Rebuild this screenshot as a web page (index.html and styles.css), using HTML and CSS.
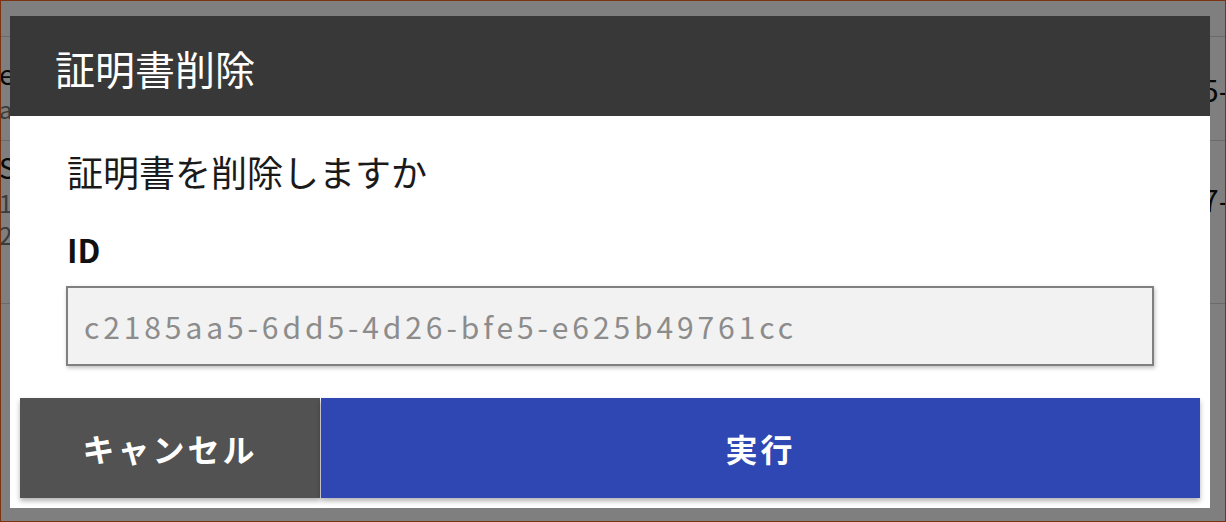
FILE: index.html
```html
<!DOCTYPE html>
<html lang="ja">
<head>
<meta charset="utf-8">
<title>証明書削除</title>
<link rel="stylesheet" href="styles.css">
</head>
<body>
<div class="frame">
  <div class="page">
    <div class="row row-first"></div>
    <div class="row row-a">
      <div class="cell-left">
        <div class="name">e</div>
        <div class="sub">a</div>
      </div>
      <div class="cell-right"><span class="clip">5-</span></div>
    </div>
    <div class="row row-b">
      <div class="cell-left">
        <div class="name">S</div>
        <div class="sub">1</div>
        <div class="sub">2</div>
      </div>
      <div class="cell-right"><span class="clip">7-</span></div>
    </div>
    <div class="row row-c"></div>
  </div>
  <div class="overlay">
    <div class="dialog">
      <div class="dialog-header">
        <h1 class="dialog-title">証明書削除</h1>
      </div>
      <div class="dialog-body">
        <p class="message">証明書を削除しますか</p>
        <div class="field-label">ID</div>
        <div class="field-input">c2185aa5-6dd5-4d26-bfe5-e625b49761cc</div>
      </div>
      <div class="dialog-actions">
        <button class="btn btn-cancel">キャンセル</button>
        <button class="btn btn-exec">実行</button>
      </div>
    </div>
  </div>
</div>
</body>
</html>
```

FILE: styles.css
```css
* { box-sizing: border-box; }
html, body { margin: 0; padding: 0; }
body {
  width: 1226px;
  height: 522px;
  overflow: hidden;
  font-family: "Noto Sans CJK JP", "Noto Sans", sans-serif;
  background: #ffffff;
}
.frame {
  position: relative;
  width: 1226px;
  height: 522px;
  border: 1px solid #7a3210;
  overflow: hidden;
  background: #ffffff;
}
.page {
  display: flex;
  flex-direction: column;
}
.row {
  display: flex;
  justify-content: space-between;
  border-bottom: 1px solid #d6d6d6;
}
.row-first { height: 36px; }
.row-a { height: 104px; }
.row-b { height: 163px; }
.row-c { height: 200px; border-bottom: none; }
.cell-left {
  width: 9px;
  overflow: hidden;
  display: flex;
  flex-direction: column;
}
.row-a .cell-left { padding-top: 16px; }
.row-b .cell-left { padding-top: 6px; }
.name {
  margin-left: -2px;
  font-size: 28px;
  line-height: 40px;
  color: #111;
}
.sub {
  margin-left: -2px;
  font-size: 24px;
  line-height: 32px;
  color: #777;
}
.cell-right {
  width: 17px;
  overflow: hidden;
  white-space: nowrap;
  font-size: 30px;
  line-height: 40px;
  color: #111;
}
.clip {
  display: inline-block;
  margin-left: -6px;
}
.row-a .cell-right { padding-top: 32px; }
.row-b .cell-right { padding-top: 38px; }

.overlay {
  position: absolute;
  inset: 0;
  background: rgba(0, 0, 0, 0.5);
  padding: 15px 0 0 9px;
}
.dialog {
  width: 1200px;
  height: 492px;
  background: #ffffff;
  display: flex;
  flex-direction: column;
}
.dialog-header {
  height: 100px;
  background: #383838;
  padding: 0 0 0 45px;
  display: flex;
  align-items: center;
}
.dialog-title {
  margin: 4px 0 0 0;
  font-size: 40px;
  font-weight: 400;
  line-height: 56px;
  color: #ffffff;
}
.dialog-body {
  flex: 1;
  padding: 0 56px;
  display: flex;
  flex-direction: column;
}
.message {
  margin: 29px 0 0 0;
  font-size: 36px;
  line-height: 52px;
  color: #1a1a1a;
  padding-left: 1px;
}
.field-label {
  margin-top: 32px;
  font-size: 32px;
  font-weight: 700;
  line-height: 40px;
  color: #111;
  padding-left: 1px;
}
.field-input {
  margin-top: 17px;
  height: 80px;
  border: 2px solid #808080;
  background: #f2f2f2;
  box-shadow: 1px 2px 4px rgba(0, 0, 0, 0.25);
  display: flex;
  align-items: center;
  padding-left: 16px;
  font-size: 30px;
  letter-spacing: 3.9px;
  color: #8c8c8c;
}
.dialog-actions {
  display: flex;
  gap: 1px;
  padding: 0 10px 10px 10px;
}
.btn {
  height: 100px;
  border: none;
  margin: 0;
  font-family: "Noto Sans CJK JP", "Noto Sans", sans-serif;
  font-size: 32px;
  font-weight: 700;
  color: #ffffff;
  letter-spacing: 3px;
  box-shadow: 0 3px 5px rgba(0, 0, 0, 0.3);
  cursor: pointer;
}
.btn-cancel {
  width: 300px;
  background: #525252;
}
.btn-exec {
  flex: 1;
  background: #2e47b3;
}
```
